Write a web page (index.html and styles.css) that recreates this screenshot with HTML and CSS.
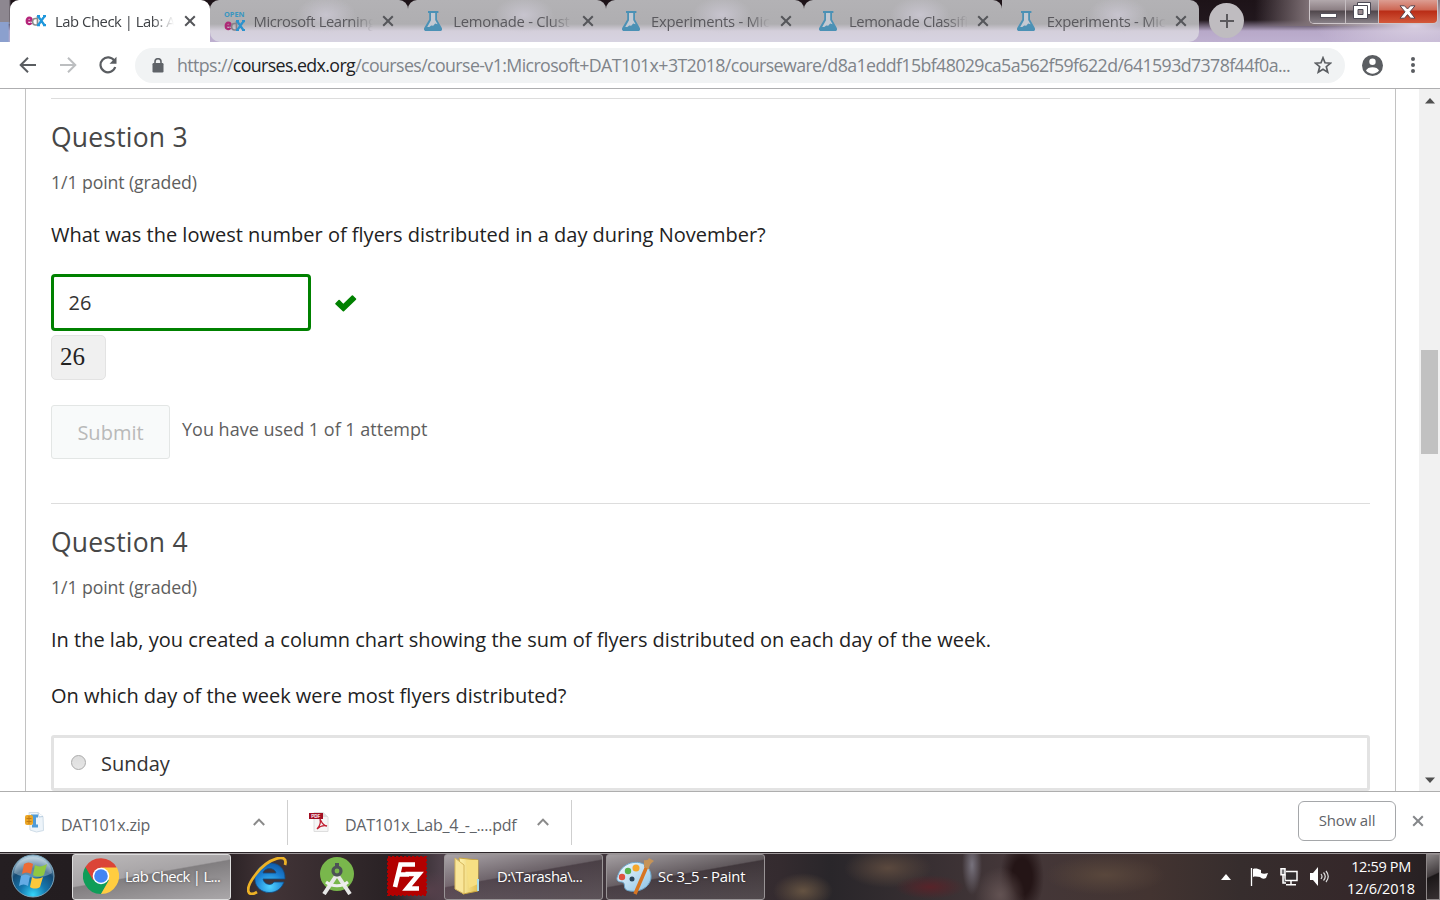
FILE: index.html
```html
<!DOCTYPE html>
<html lang="en">
<head>
<meta charset="utf-8">
<title>Lab Check | Lab</title>
<link rel="stylesheet" href="styles.css">
</head>
<body>
<svg width="0" height="0" class="defs" aria-hidden="true">
  <defs>
    <linearGradient id="folder" x1="0" x2="1"><stop offset="0" stop-color="#fff4b0"/><stop offset="1" stop-color="#e2bf50"/></linearGradient>
    <radialGradient id="orb" cx=".5" cy=".95" r=".9"><stop offset="0" stop-color="#35d5fb"/><stop offset=".35" stop-color="#1577ae"/><stop offset=".7" stop-color="#164a73"/><stop offset="1" stop-color="#a9c6d8"/></radialGradient>
    <radialGradient id="ie" cx=".5" cy=".8" r=".8"><stop offset="0" stop-color="#4fd2ff"/><stop offset=".6" stop-color="#1a7fd2"/><stop offset="1" stop-color="#125ba8"/></radialGradient>
    <linearGradient id="palette" x1="0" y1="0" x2="1" y2="1"><stop offset="0" stop-color="#f4fbff"/><stop offset="1" stop-color="#8bc3e6"/></linearGradient>
    <symbol id="x" viewBox="0 0 12 12"><path d="M1.2 1.2 10.8 10.8M10.8 1.2 1.2 10.8" stroke="currentColor" stroke-width="2" fill="none"/></symbol>
    <symbol id="flask" viewBox="0 0 18 20"><path fill="#4b91b5" d="M4 0h10.400v2H13v6.500l4.700 8.300c.8 1.700.2 3.200-1.600 3.200H2c-1.800 0-2.500-1.500-1.700-3.200L5.200 8.500V2H4z"/><path fill="#c3c9d2" d="M7 2h4.200v7l2.400 4.300-2.400-.8-2 2.300-2-.4L5.300 16H3.200L7 9.200z"/></symbol>
    <symbol id="up" viewBox="0 0 12 8"><path d="M.8 7 6 1.600 11.200 7" fill="none" stroke="#8a8a8a" stroke-width="2"/></symbol>
  </defs>
</svg>
<header class="tabstrip">
  <div class="tab active">
    <svg class="fav edx" width="21" height="12" viewBox="0 0 21 12"><path d="M1.500 5.700h5.200c0-4-5-4-5 0s3.400 4.200 4.800 2.200" fill="none" stroke="#b5257a" stroke-width="2.200"/><path d="M12.500 1v9h-2c-4 0-4-6.500 0-6.500h2" fill="none" stroke="#8c8c8c" stroke-width="1.700"/><path d="m13.300 1.500 6 8.500m0-8.500-6 8.500M12 1.200h3m3 0h3m-9 9h3m3 0h3" stroke="#1f97dc" stroke-width="2.200"/></svg>
    <span class="tab-title t1">Lab Check | Lab: A</span><svg class="close"><use href="#x"/></svg>
  </div>
  <div class="tab open">
    <svg class="fav" width="21" height="20" viewBox="0 0 21 20"><text class="open-text" x="0" y="6.200" textLength="20.500" lengthAdjust="spacingAndGlyphs">OPEN</text><g transform="translate(0 9)"><path d="M1.500 5.700h5.200c0-4-5-4-5 0s3.400 4.200 4.800 2.200" fill="none" stroke="#ad2a76" stroke-width="2.200"/><path d="M12.500 1v9h-2c-4 0-4-6.500 0-6.500h2" fill="none" stroke="#858089" stroke-width="1.700"/><path d="m13.300 1.500 6 8.500m0-8.500-6 8.500M12 1.200h3m3 0h3m-9 9h3m3 0h3" stroke="#2c92cd" stroke-width="2.200"/></g></svg>
    <span class="tab-title t2">Microsoft Learning</span><svg class="close"><use href="#x"/></svg>
  </div>
  <div class="tab"><svg class="fav flask"><use href="#flask"/></svg><span class="tab-title t3">Lemonade - Clust</span><svg class="close"><use href="#x"/></svg></div>
  <div class="tab"><svg class="fav flask"><use href="#flask"/></svg><span class="tab-title t4">Experiments - Mic</span><svg class="close"><use href="#x"/></svg></div>
  <div class="tab"><svg class="fav flask"><use href="#flask"/></svg><span class="tab-title t5">Lemonade Classifi</span><svg class="close"><use href="#x"/></svg></div>
  <div class="tab last"><svg class="fav flask"><use href="#flask"/></svg><span class="tab-title t4">Experiments - Mic</span><svg class="close"><use href="#x"/></svg></div>
  <button class="newtab" aria-label="New tab"><svg width="16" height="16" viewBox="0 0 16 16"><path d="M8 1v14M1 8h14" stroke="#5b595d" stroke-width="2"/></svg></button>
  <div class="winbuttons">
    <i class="min"><svg width="17" height="5"><rect x=".5" y=".5" width="16" height="4" fill="#fff" stroke="#55525c"/></svg></i>
    <i class="max"><svg width="18" height="17" viewBox="0 0 18 17"><path d="M4.500.5h13v12h-13z" fill="#fff" stroke="#4c4a55"/><path d="M.5 3.500h14v13H.5z" fill="#fff" stroke="#4c4a55"/><path d="M5 7.500h5v5H5z" fill="#9c8d92" stroke="#4c4a55"/></svg></i>
    <i class="shut"><svg width="17" height="14" viewBox="0 0 17 14"><path d="M1 .8h4.500l3 3.200 3-3.200H16l-5 6 5 6.400h-4.500l-3-3.600-3 3.600H1l5-6.400z" fill="#fff" stroke="#59424a"/></svg></i>
  </div>
</header>
<nav class="toolbar">
  <svg class="back" width="18" height="16" viewBox="0 0 18 16"><path d="M17 8H2M9 .8 1.700 8 9 15.200" fill="none" stroke="#5a5d61" stroke-width="2"/></svg>
  <svg class="fwd" width="18" height="16" viewBox="0 0 18 16"><path d="M1 8h15M9 .8 16.300 8 9 15.200" fill="none" stroke="#bcbec0" stroke-width="2"/></svg>
  <svg class="reload" width="18" height="18" viewBox="0 0 18 18"><path d="M15.300 4.700A7.500 7.500 0 1 0 16.200 11" fill="none" stroke="#5a5d61" stroke-width="2.200"/><path d="M17.500.8v7h-7z" fill="#5a5d61"/></svg>
  <div class="omnibox">
    <svg class="lock" width="12" height="15" viewBox="0 0 12 15"><rect x=".5" y="5" width="11" height="9.500" rx="1.200" fill="#5f6368"/><path d="M3 6V3.700a3 3 0 0 1 6 0V6" fill="none" stroke="#5f6368" stroke-width="1.600"/></svg>
    <span class="url">https://<b>courses.edx.org</b>/courses/course-v1:Microsoft+DAT101x+3T2018/courseware/d8a1eddf15bf48029ca5a562f59f622d/641593d7378f44f0a...</span>
    <svg class="star" width="18" height="18" viewBox="0 0 18 18"><path d="m9 1.800 2 5 5.500.4-4.200 3.500 1.400 5.400L9 13.200l-4.700 2.900 1.400-5.400-4.200-3.500L7 6.800z" fill="none" stroke="#5a5d61" stroke-width="1.700"/></svg>
  </div>
  <svg class="user" width="21" height="21" viewBox="0 0 21 21"><circle cx="10.500" cy="10.500" r="10.500" fill="#5a5d61"/><circle cx="10.500" cy="6.800" r="3.200" fill="#fff"/><path d="M4 15.500c1.500-4.500 11.500-4.500 13 0-3.300 4.200-9.700 4.200-13 0z" fill="#fff"/></svg>
  <svg class="dots" width="4" height="16"><circle cx="2" cy="2" r="2"/><circle cx="2" cy="8" r="2"/><circle cx="2" cy="14" r="2"/></svg>
</nav>
<section class="view">
  <main class="paper">
    <article class="problem">
      <h3>Question 3</h3>
      <p class="points">1/1 point (graded)</p>
      <p class="ask q1">What was the lowest number of flyers distributed in a day during November?</p>
      <div class="answer"><div class="field">26</div><svg width="22" height="17" viewBox="0 0 22 17"><path d="M.4 8.200 3.500 5.100q.6-.5 1.200 0l3.600 3.700L16.800.5q.6-.5 1.200 0l3 3q.5.600 0 1.200L9 16.300q-.6.500-1.200 0L.4 9.300q-.5-.5 0-1.100z" fill="#008100"/></svg></div>
      <div class="preview">26</div>
      <div class="action"><button class="submit">Submit</button><span class="used">You have used 1 of 1 attempt</span></div>
    </article>
    <article class="problem second">
      <h3>Question 4</h3>
      <p class="points">1/1 point (graded)</p>
      <p class="ask q2">In the lab, you created a column chart showing the sum of flyers distributed on each day of the week.</p>
      <p class="ask q3">On which day of the week were most flyers distributed?</p>
      <div class="choice"><i class="radio"></i><span>Sunday</span></div>
    </article>
  </main>
  <aside class="scroll">
    <svg width="10" height="6"><path d="M5 0l5 5.500H0z" fill="#505050"/></svg>
    <i class="thumb"></i>
    <svg width="10" height="6"><path d="M0 .5h10L5 6z" fill="#505050"/></svg>
  </aside>
</section>
<footer class="downloads">
  <div class="item zip">
    <svg width="20" height="21" viewBox="0 0 20 21"><path d="M4 .5h9l5 4 .5 14-7 1.500L5 18z" fill="#edf4fa" stroke="#cfdde8"/><path d="M13 .5 14 5l4-.5" fill="#fff" stroke="#b6cce0"/><path d="M6 2.500h7v3h-2v7h2v3H7v-3h1v-7H6z" fill="#4f9bd8"/><rect y="3" width="8" height="10" rx="2" fill="#eba626"/><path d="M1.500 6.500h5M1.500 9.500h5M4 4v8" stroke="#c17a13"/></svg>
    <span class="name">DAT101x.zip</span><svg class="chev"><use href="#up"/></svg>
  </div>
  <div class="item pdf">
    <svg width="20" height="20" viewBox="0 0 20 20"><path d="M5 .5h9l5 4.500v14.500H5z" fill="#f5f5f5" stroke="#dedede"/><path d="M14 .5V5h5" fill="#ddd"/><path d="M0 1h14v6H0z" fill="#a20f22"/><text class="pdf-text" x="2.200" y="5.600" textLength="9">PDF</text><path d="M11 7c2 3 2 6 7 7-4-1-7 0-10 3 3-3 4-6 3-10z" fill="none" stroke="#c01d30" stroke-width="1.300"/></svg>
    <span class="name">DAT101x_Lab_4_-_....pdf</span><svg class="chev"><use href="#up"/></svg>
  </div>
  <button class="showall">Show all</button>
  <svg class="dismiss"><use href="#x"/></svg>
</footer>
<footer class="taskbar">
  <svg class="start" width="44" height="44" viewBox="0 0 44 44"><circle cx="22" cy="22" r="21" fill="url(#orb)" stroke="#7aa5bd"/><path d="M3 19C5-2 39-2 41 19c-9 6-28 6-38 0z" fill="#fff" opacity=".3"/><path d="M13 10c3-2 6-2 9 0l-2 10c-3-2-6-2-9 0z" fill="#ed6b35"/><path d="M24 11c3 2 7 2 12-1l-3 11c-3 2-8 2-11 0z" fill="#90c842"/><path d="M10 22c3-2 6-2 9 0l-2 10c-3-2-6-2-9 0z" fill="#64abe5"/><path d="M21 23c3 2 7 2 11 0l-3 10c-3 2-7 2-10 0z" fill="#fcc83b"/></svg>
  <div class="task current"><svg width="36" height="36" viewBox="0 0 36 36"><path d="M2.400 9A18 18 0 0 0 18 36l8-14-8-4z" fill="#0f9d58"/><path d="M33.600 9A18 18 0 0 1 18 36l7.800-13.500L18 9z" fill="#ffcd40"/><path d="M2.400 9 10.200 22.500 18 9.500h15.600a18 18 0 0 0-31.200-.5z" fill="#db4437"/><circle cx="18" cy="18" r="8.300" fill="#fff"/><circle cx="18" cy="18" r="6.800" fill="#4285f4"/></svg><span class="l1">Lab Check | L...</span></div>
  <svg class="ie" width="40" height="38" viewBox="0 0 40 38"><path d="M38 22H16c1 6 9 7 11 3h10c-6 17-31 12-29-5C10 1 39 1 38 22zM16 16h13c-1-6-12-6-13 0z" fill="url(#ie)" stroke="#124d84" stroke-width=".8"/><path d="M38 8C42-5 21 1 9 17-3 32 0 41 10 35" fill="none" stroke="#edb226" stroke-width="2.800"/></svg>
  <svg class="studio" width="36" height="38" viewBox="0 0 36 38"><circle cx="18" cy="17" r="17" fill="#79b74c"/><path d="M17 19 5 37M19 19l12 18" stroke="#e8e8e8" stroke-width="4"/><path d="M7 25c6 5 16 5 22 0" stroke="#eee" stroke-width="3" fill="none"/><circle cx="18" cy="14" r="4" fill="none" stroke="#4c5256" stroke-width="3.200"/><path d="M18 6v4" stroke="#4c5256" stroke-width="4"/></svg>
  <svg class="fz" width="40" height="40" viewBox="0 0 40 40"><rect x="1" y="1" width="38" height="38" fill="#b20000" stroke="#b20000" stroke-width="2" stroke-dasharray="2.400 1.600"/><path d="M28 8.500H13.500L8 31M11 18.500h11M18.500 18H32L20 32.500h12" fill="none" stroke="#fff" stroke-width="4.600"/></svg>
  <div class="task folder"><svg width="27" height="38" viewBox="0 0 27 38"><path d="M5 1 24 3v31L9 37z" fill="url(#folder)" stroke="#caa63f"/><path d="M12 3h12v24l-9 4z" fill="#f6df83"/><path d="M1 1l9 7v29l-9-5z" fill="#f9e69a" stroke="#d6b65a"/><path d="M24 22v12" stroke="#a9dbe8" stroke-width="2"/></svg><span class="l2">D:\Tarasha\...</span></div>
  <div class="task paint"><svg width="40" height="38" viewBox="0 0 40 38"><path d="M3 18C8 4 27 1 34 12c7 13-5 24-19 22-9-1-3-8-8-9-3 0-7-1-4-7z" fill="url(#palette)" stroke="#6da7cc"/><circle cx="7" cy="20" r="3.200" fill="#df5240"/><circle cx="13" cy="14" r="3.200" fill="#58b24e"/><circle cx="21" cy="11" r="3.500" fill="#f5a72c"/><circle cx="17" cy="22" r="2.500" fill="#29445a"/><path d="m32 9-12 28" stroke="#d77522" stroke-width="3.500"/><path d="M29 3q4 1 5-2l5 3q-5 3-5 8l-5-2z" fill="#c59358"/></svg><span class="l3">Sc 3_5 - Paint</span></div>
  <div class="tray">
    <svg class="arrow" width="10" height="6"><path d="M5 0l5 6H0z" fill="#fff"/></svg>
    <svg class="flag" width="18" height="18" viewBox="0 0 18 18"><path d="M1.500 0v18" stroke="#fff" stroke-width="1.300"/><path d="M3 1c3-1 5 0 8 1v3c2 1 4 1 7 0l-2 5c-2 1-4 1-6-1-2 0-4-1-7 0z" fill="#fff"/></svg>
    <svg class="net" width="18" height="18" viewBox="0 0 18 18"><path d="M6 3.500h11v9H5v-6" fill="#302c2e" stroke="#fff" stroke-width="1.500"/><path d="M1 .8h4v6H1zM3 7v8h3M11 13v3M6 16.800h10" fill="#77777a" stroke="#fff" stroke-width="1.500"/></svg>
    <svg class="sound" width="19" height="19" viewBox="0 0 19 19"><path d="M0 6h3l5-6v19l-5-6H0z" fill="#fff"/><path d="M11 7q2 2.500 0 5M13.500 5.500q3.500 4 0 8M16 4q4.500 5.500 0 11" fill="none" stroke="#dedede" stroke-width="1.200"/></svg>
    <div class="clock"><span>12:59 PM</span><span class="date">12/6/2018</span></div>
    <i class="peek"></i>
  </div>
</footer>
</body>
</html>
```

FILE: styles.css
```css
* { box-sizing: border-box; }
body { margin: 0; width: 1440px; height: 900px; overflow: hidden; display: flex; flex-direction: column; background: #fff; font-family: "Open Sans", "Noto Sans", sans-serif; }
svg { flex: none; display: block; }
button { font: inherit; padding: 0; margin: 0; }
i { font-style: normal; }
.defs { position: absolute; }

.tabstrip { height: 42px; flex: none; display: flex; padding-left: 10px; background: radial-gradient(ellipse at 1427px 41px, #6f8ed0 0 3px, transparent 15px), radial-gradient(ellipse 100px 30px at 1415px 26px, #d9cfe2, transparent), linear-gradient(90deg, transparent 1255px, #807277 1310px, #776b71 1440px) top/100% 26px no-repeat, linear-gradient(90deg, #8ba0ce 0 8px, transparent 10px) bottom/100% 20px no-repeat, linear-gradient(90deg, #8d8790 0 9px, transparent 11px) top/100% 24px no-repeat, linear-gradient(#1d1318 0, #21171d 20px, #b7a8c8 31px, #beb0d0); }
.tab { width: 197.800px; height: 42px; flex: none; display: flex; align-items: center; padding-left: 15.500px; border-radius: 9px 9px 0 0; position: relative; color: #5a595e; background: radial-gradient(ellipse 30px 18px at 116px 15px, #c7c4ce, transparent), linear-gradient(#b3b2b5 0, #afaeb1 24px, #d4cfdb 31px, #d7d3e1 42px); }
.tab::after { content: ""; position: absolute; right: -1px; top: 9px; height: 25px; width: 1px; background: #8c8a90; }
.tab.active { width: 200px; padding-left: 15px; background: #fff; color: #3e4145; }
.tab.active::after, .tab.last::after { display: none; }
.tab.open { width: 198.300px; border-radius: 9px 9px 0 10px; padding-left: 13.500px; }
.tab.last { border-radius: 0 9px 10px 0; }
.fav { width: 21px; }
.flask { width: 18px; height: 20px; margin-right: 2.500px; }
.tab-title { width: 119px; margin-left: 9px; margin-top: -1px; font-size: 14.800px; line-height: 22px; white-space: nowrap; -webkit-mask-image: linear-gradient(90deg, #000 97px, transparent 119px); mask-image: linear-gradient(90deg, #000 97px, transparent 119px); }
.t1 { letter-spacing: -.45px; }
.t2 { letter-spacing: -.4px; }
.t3, .t4 { letter-spacing: -.25px; }
.t5 { letter-spacing: -.35px; }
.close { width: 12px; height: 12px; margin-left: 9.500px; color: #55565a; }
.open-text { font: bold 7px "Open Sans", sans-serif; fill: #3996c0; }
.newtab { width: 35px; height: 35px; margin: 3px 0 0 10px; border: 0; border-radius: 50%; background: #bfbcc0; display: flex; align-items: center; justify-content: center; }
.winbuttons { width: 129px; height: 24px; margin-left: auto; margin-right: 2.500px; display: flex; border: 1px solid #cdc6ca; border-top: 0; border-radius: 0 0 5px 5px; overflow: hidden; }
.winbuttons i { display: flex; align-items: center; justify-content: center; background: linear-gradient(#b2a8ac, #8b7e83 10px, #50474c 11px, #888087); border-right: 1px solid #c5bdc1; }
.winbuttons .min { width: 36px; padding-top: 7px; padding-left: 2px; }
.winbuttons .max { width: 33px; padding-bottom: 3px; }
.winbuttons .shut { flex: 1; border: 0; background: linear-gradient(#dc9d92, #cd6653 10px, #b92c16 11px, #d3583a); }

.toolbar { height: 47px; flex: none; display: flex; align-items: center; padding-left: 19px; border-bottom: 1px solid #aeaeb0; }
.fwd { margin-left: 22px; }
.reload { margin-left: 22px; }
.omnibox { width: 1210px; height: 35px; margin-left: 18px; border-radius: 18px; background: #f1f3f4; display: flex; align-items: center; padding-left: 17px; }
.url { width: 1145px; margin: -1px 0 0 13px; white-space: nowrap; font-size: 17.800px; line-height: 28px; color: #7f848a; letter-spacing: -.607px; }
.url b { font-weight: 400; color: #202124; }
.star { margin-left: -8px; }
.user { margin-left: 17px; }
.dots { margin-left: 28px; fill: #5a5d61; }

.view { height: 703px; flex: none; display: flex; overflow: hidden; border-bottom: 1px solid #aeaeae; }
.paper { width: 1371px; height: 760px; margin-left: 25px; padding: 9px 25px 0; border: solid #c2c2c2; border-width: 0 1px; }
.problem { height: 405px; border-top: 1px solid #ddd; }
.problem h3 { margin: 19px 0 0; font-size: 26.500px; line-height: 38px; font-weight: 400; color: #474747; letter-spacing: .2px; }
.points { margin: 14px 0 0; font-size: 17.700px; line-height: 24px; color: #5e5e5e; letter-spacing: -.1px; }
.ask { margin: 24px 0 0; font-size: 20px; line-height: 32px; color: #222; white-space: nowrap; }
.points + .ask { margin-top: 25px; }
.answer { display: flex; align-items: center; margin-top: 23px; }
.answer svg { margin-top: 1px; }
.field { width: 260px; height: 57px; border: 3px solid #008100; border-radius: 4px; padding-left: 14.500px; font-size: 20px; line-height: 51px; color: #333; margin-right: 24px; }
.preview { width: 55px; height: 45px; margin-top: 4px; padding-left: 8px; border: 1px solid #e3e3e3; border-radius: 5px; background: #f0f0f0; font: 25px/42px "Liberation Serif", serif; color: #222; }
.action { display: flex; margin-top: 25px; }
.submit { width: 119px; height: 54px; border: 1px solid #e3e6e5; border-radius: 3px; background: #f8fafa; color: #b9b9b9; font-size: 20px; line-height: 54px; }
.used { margin: 11px 0 0 12px; font-size: 18px; line-height: 26px; color: #5e5e5e; }
.choice { height: 56px; margin-top: 23px; border: 3px solid #e3e3e3; border-radius: 3px; display: flex; align-items: center; padding-left: 17px; color: #333; font-size: 20px; }
.radio { width: 15px; height: 15px; border: 1px solid #aaa; border-radius: 50%; background: linear-gradient(#ddd, #e6e6e6); margin: -2px 15px 0 0; }
.scroll { width: 21px; margin-left: auto; display: flex; flex-direction: column; align-items: center; padding: 9px 0 8px; background: #f1f1f1; }
.thumb { width: 17px; height: 104px; background: #c1c1c1; margin: 246px 0 auto; }

.downloads { height: 60px; flex: none; display: flex; align-items: center; color: #5f6368; }
.item { height: 45px; display: flex; align-items: center; border-right: 1px solid #cfcfcf; }
.zip { width: 288px; padding-left: 25px; }
.pdf { width: 284px; padding-left: 21px; }
.name { width: 190px; font-size: 16px; line-height: 24px; padding-top: 5px; margin-left: 16px; letter-spacing: -.27px; white-space: nowrap; }
.pdf .name { width: 192px; }
.chev { width: 12px; height: 8px; margin-left: 2px; }
.pdf .chev { margin-left: 0; }
.pdf-text { font: bold 4.500px "Liberation Sans", sans-serif; fill: #fff; }
.showall { width: 98px; height: 40px; margin: -2px 16px 0 auto; border: 1px solid #a5a7aa; border-radius: 6px; background: #fff; color: #5f6368; font-size: 15px; letter-spacing: -.15px; padding-bottom: 2px; }
.dismiss { width: 12px; height: 12px; margin: -2px 16px 0 0; color: #85878a; }

.taskbar { height: 48px; flex: none; display: flex; align-items: center; padding-left: 11px; color: #fff; border-top: 1px solid #2b2528; box-shadow: inset 0 1px #9c9698; background: radial-gradient(ellipse 25px 28px at 1000px 42px, #625252, transparent), radial-gradient(ellipse 10px 30px at 972px 12px, #77727d, transparent), radial-gradient(ellipse 35px 12px at 930px 34px, #582329, transparent), radial-gradient(ellipse 30px 18px at 803px 38px, #655342, transparent), radial-gradient(ellipse 44px 20px at 888px 15px, #5b493e, transparent), radial-gradient(ellipse 60px 20px at 1105px 22px, #59473c, transparent), radial-gradient(ellipse 22px 40px at 1022px 24px, #241516 45%, transparent), radial-gradient(ellipse 40px 20px at 428px 38px, #56404b, transparent), linear-gradient(90deg, #241e21 0, #211b1e 210px, #423437 270px, #272023 400px, #4d4049 440px, #342b2f 780px, #29262a 830px, #443739 1010px, #433431 1150px, #362d2d 1240px, #35282a 1350px, #241f21 1440px); }
.start, .ie, .studio, .fz { margin-top: -1px; }
.task { height: 46px; width: 159px; display: flex; align-items: center; border: 1px solid #999496; border-radius: 3px; font-size: 14.800px; white-space: nowrap; background: linear-gradient(170deg, #ffffff85 0, #ffffff35 44%, #ffffff0c 46%, #ffffff25 100%); }
.task svg { margin-top: -1px; }
.task span { text-shadow: 0 0 3px #0007; margin-top: -2px; }
.current { margin-left: 17px; padding-left: 10px; border-color: #ddd; background: linear-gradient(170deg, #bdbabb 0, #a7a4a6 44%, #817e80 46%, #aaa7a9 100%); }
.l1 { letter-spacing: -.65px; margin-left: 6px; }
.ie { margin-left: 16px; }
.studio { margin-left: 32px; }
.fz { margin-left: 32px; }
.folder { margin-left: 17px; padding-left: 9px; }
.l2 { letter-spacing: -.48px; margin-left: 16px; }
.paint { margin-left: 3px; padding-left: 8px; }
.l3 { letter-spacing: -.2px; margin-left: 3px; }
.tray { margin-left: auto; height: 47px; display: flex; align-items: center; }
.flag { margin-left: 19px; }
.net { margin-left: 12px; }
.sound { margin-left: 12px; }
.clock { width: 80px; margin-left: 12px; display: flex; flex-direction: column; align-items: center; font-size: 14.500px; line-height: 22px; letter-spacing: -.35px; padding-top: 2px; }
.date { letter-spacing: -.1px; }
.peek { width: 14px; height: 46px; margin-left: 5px; border: 1px solid #8d8788; background: linear-gradient(155deg, #8a8586, #423c3e 45%, #1b1718 48%, #383133); }
```
